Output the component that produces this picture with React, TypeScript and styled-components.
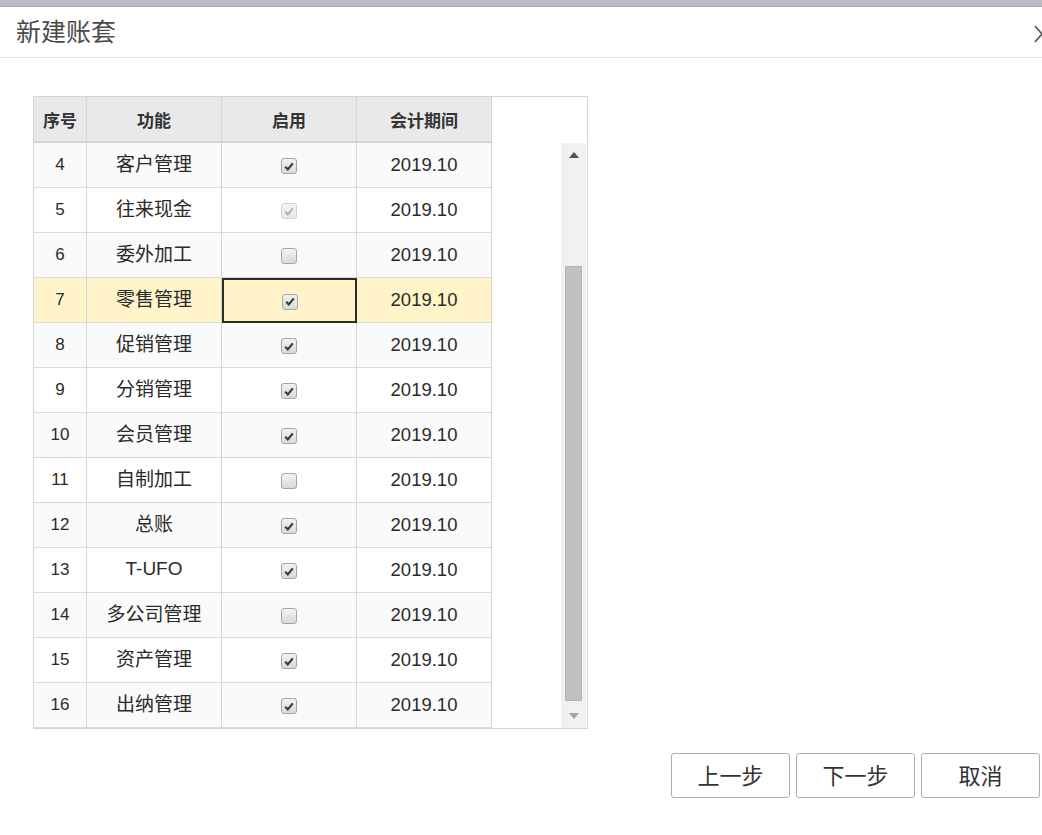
import React from 'react';
import styled, { createGlobalStyle } from 'styled-components';

const GlobalStyle = createGlobalStyle`
  body {
    margin: 0;
    background: #fff;
    font-family: "Liberation Sans", "Noto Sans CJK SC", sans-serif;
    color: #333;
  }
`;

const Page = styled.div`
  width: 1042px;
  height: 835px;
  overflow: hidden;
  background: #fff;
`;

const TopStrip = styled.div`
  height: 6px;
  background: #b8bbbf;
  border-bottom: 1px solid #a9acb0;
`;

const TitleBar = styled.div`
  box-sizing: border-box;
  height: 51px;
  display: flex;
  align-items: center;
  justify-content: space-between;
  padding: 0 0 5px 16px;
  border-bottom: 1px solid #e6e6e6;
  font-size: 25px;
  color: #4a4a4a;
`;

const Close = styled.div`
  width: 16px;
  height: 18px;
  margin-right: -8px;
  margin-top: -2px;
`;

const Content = styled.div`
  padding: 38px 0 0 33px;
`;

const GridBox = styled.div`
  width: 553px;
  border: 1px solid #d5d5d5;
  background: #fff;
`;

const HeadRow = styled.div`
  display: flex;
  width: 458px;
  height: 44px;
  background: #e9e9e9;
  border-bottom: 2px solid #d3d3d3;
`;

const Body = styled.div`
  display: flex;
  justify-content: space-between;
  height: 585px;
`;

const Rows = styled.div`
  width: 458px;
`;

const Row = styled.div<{ $alt: boolean; $sel: boolean }>`
  display: flex;
  height: 45px;
  background: ${p => (p.$sel ? '#fff4c9' : p.$alt ? '#fafafa' : '#fff')};
`;

const Cell = styled.div<{ $w: number; $head?: boolean; $focus?: boolean }>`
  box-sizing: border-box;
  width: ${p => p.$w}px;
  display: flex;
  align-items: center;
  justify-content: center;
  border-right: 1px solid #d6d6d6;
  border-bottom: ${p => (p.$head ? 'none' : '1px solid #dadada')};
  font-size: ${p => (p.$head ? '17px' : '18.5px')};
  font-weight: ${p => (p.$head ? 'bold' : 'normal')};
  color: ${p => (p.$head ? '#333' : '#2a2a2a')};
  ${p => p.$focus && 'border: 2px solid #2b2b2b;'}
`;

const IdCell = styled(Cell)`
  font-size: 17px;
`;

const NameCell = styled(Cell)<{ $latin?: boolean }>`
  font-size: 19px;
  padding-bottom: ${p => (p.$latin ? '2px' : '6px')};
`;

const Box = styled.span<{ $dis?: boolean }>`
  width: 16px;
  height: 16px;
  box-sizing: border-box;
  border: 1px solid ${p => (p.$dis ? '#d0d0d0' : '#a6a6a6')};
  border-radius: 3px;
  background: ${p => (p.$dis ? 'linear-gradient(#f4f4f4, #e9e9e9)' : 'linear-gradient(#f2f2f2, #dadada)')};
  display: flex;
  align-items: center;
  justify-content: center;
  margin-top: 2px;
`;

const Scroll = styled.div`
  width: 25px;
  margin-right: 1px;
  background: #f1f1f1;
  display: flex;
  flex-direction: column;
  align-items: center;
`;

const Arrow = styled.div`
  height: 24px;
  display: flex;
  align-items: center;
  justify-content: center;
`;

const Track = styled.div`
  flex: 1;
  width: 100%;
  display: flex;
  flex-direction: column;
  align-items: center;
`;

const Thumb = styled.div`
  width: 17px;
  margin-top: 99px;
  height: 435px;
  background: #c1c1c1;
  border: 1px solid #b5b5b5;
  box-sizing: border-box;
`;

const Footer = styled.div`
  display: flex;
  justify-content: flex-end;
  gap: 6px;
  padding: 24px 2px 0 0;
`;

const Btn = styled.button`
  width: 119px;
  height: 45px;
  border: 1px solid #a9b0ba;
  border-radius: 3px;
  background: #fff;
  font-family: "Liberation Sans", "Noto Sans CJK SC", sans-serif;
  font-size: 22px;
  color: #333;
  padding: 0 0 3px;
`;

const W = [53, 135, 135, 135];

type Item = { id: number; name: string; on: boolean; dis?: boolean };

const items: Item[] = [
  { id: 4, name: '客户管理', on: true },
  { id: 5, name: '往来现金', on: true, dis: true },
  { id: 6, name: '委外加工', on: false },
  { id: 7, name: '零售管理', on: true },
  { id: 8, name: '促销管理', on: true },
  { id: 9, name: '分销管理', on: true },
  { id: 10, name: '会员管理', on: true },
  { id: 11, name: '自制加工', on: false },
  { id: 12, name: '总账', on: true },
  { id: 13, name: 'T-UFO', on: true },
  { id: 14, name: '多公司管理', on: false },
  { id: 15, name: '资产管理', on: true },
  { id: 16, name: '出纳管理', on: true },
];

const Check: React.FC<{ on: boolean; dis?: boolean }> = ({ on, dis }) => (
  <Box $dis={dis}>
    {on && (
      <svg width="10" height="9" viewBox="0 0 10 9">
        <path
          d="M1.2 4.8 L3.8 7.4 L8.8 1.4"
          fill="none"
          stroke={dis ? '#b4b4b4' : '#3a3a3a'}
          strokeWidth="2.2"
        />
      </svg>
    )}
  </Box>
);

export default function App() {
  return (
    <Page>
      <GlobalStyle />
      <TopStrip />
      <TitleBar>
        新建账套
        <Close>
          <svg width="16" height="18" viewBox="0 0 16 18">
            <path d="M1 1 L15 17 M15 1 L1 17" stroke="#555" strokeWidth="1.8" />
          </svg>
        </Close>
      </TitleBar>
      <Content>
        <GridBox>
          <HeadRow>
            <Cell $w={W[0]} $head>序号</Cell>
            <Cell $w={W[1]} $head>功能</Cell>
            <Cell $w={W[2]} $head>启用</Cell>
            <Cell $w={W[3]} $head>会计期间</Cell>
          </HeadRow>
          <Body>
            <Rows>
              {items.map((it, i) => (
                <Row key={it.id} $alt={i % 2 === 0} $sel={it.id === 7}>
                  <IdCell $w={W[0]}>{it.id}</IdCell>
                  <NameCell $w={W[1]} $latin={/^[A-Z]/.test(it.name)}>{it.name}</NameCell>
                  <Cell $w={W[2]} $focus={it.id === 7}>
                    <Check on={it.on} dis={it.dis} />
                  </Cell>
                  <Cell $w={W[3]}>2019.10</Cell>
                </Row>
              ))}
            </Rows>
            <Scroll>
              <Arrow>
                <svg width="10" height="6" viewBox="0 0 10 6">
                  <path d="M0 6 L5 0 L10 6 Z" fill="#505050" />
                </svg>
              </Arrow>
              <Track>
                <Thumb />
              </Track>
              <Arrow>
                <svg width="10" height="6" viewBox="0 0 10 6">
                  <path d="M0 0 L10 0 L5 6 Z" fill="#a3a3a3" />
                </svg>
              </Arrow>
            </Scroll>
          </Body>
        </GridBox>
        <Footer>
          <Btn>上一步</Btn>
          <Btn>下一步</Btn>
          <Btn>取消</Btn>
        </Footer>
      </Content>
    </Page>
  );
}
